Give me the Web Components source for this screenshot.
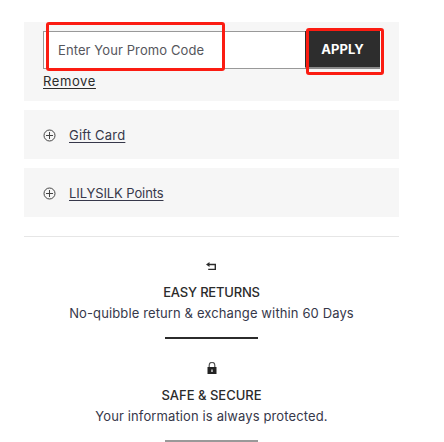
<!DOCTYPE html>
<html>
<head>
<meta charset="utf-8">
<style>
    html, body { margin: 0; padding: 0; background: #fff; }
    body { font-family: Inter, Roboto, sans-serif; color: #2b2b2b; overflow: hidden; height: 442px; }
    main { display: block; width: 375px; margin-left: 24px; padding-top: 22px; }
</style>
</head>
<body>
<main>
    <promo-box></promo-box>
    <toggle-row style="--track: .2px">Gift Card</toggle-row>
    <toggle-row style="--track: -.1px">LILYSILK Points</toggle-row>
    <hr-line></hr-line>
    <service-item heading="EASY RETURNS" icon="return" style="--track: -.2px">No-quibble return &amp; exchange within 60 Days</service-item>
    <service-item heading="SAFE &amp; SECURE" icon="lock" fade>Your information is always protected.</service-item>
</main>
<script>
class PromoBox extends HTMLElement {
    connectedCallback() {
        this.attachShadow({mode: 'open'});
        this.shadowRoot.innerHTML = `
            <style>
                :host { display: block; position: relative; height: 79px; background: #f6f6f6; padding: 9px 19px 0; box-sizing: border-box; }
                .row { display: flex; width: 337px; height: 38px; }
                .field { flex: 1; box-sizing: border-box; border: 1px solid #999; border-right: 0; background: #fff; padding-left: 14px; display: flex; align-items: center; font-size: 13px; letter-spacing: .1px; color: #55565c; }
                button { width: 75px; height: 38px; box-sizing: border-box; border: 0; border-bottom: 2px solid #8a8a8a; background: #2d2d2d; color: #fff; padding: 0; font: 700 13px Inter, sans-serif; }
                a { display: block; width: fit-content; margin-top: 4px; font-size: 13px; line-height: 16px; letter-spacing: .6px; color: #2b2b2b; text-decoration: underline; text-underline-offset: 2px; }
                .mark { position: absolute; box-sizing: border-box; border: 3px solid #fb1c12; border-radius: 3px; }
                .m1 { left: 22px; top: 0; width: 179px; height: 49px; }
                .m2 { left: 282px; top: 6px; width: 78px; height: 47px; }
            </style>
            <div class="row">
                <div class="field">Enter Your Promo Code</div>
                <button>APPLY</button>
            </div>
            <a>Remove</a>
            <div class="mark m1"></div>
            <div class="mark m2"></div>
        `;
    }
}

class ToggleRow extends HTMLElement {
    connectedCallback() {
        this.attachShadow({mode: 'open'});
        this.shadowRoot.innerHTML = `
            <style>
                :host { display: flex; align-items: center; gap: 13px; height: 49px; margin-top: 9px; padding-left: 19px; background: #f6f6f6; font-size: 13px; letter-spacing: var(--track, 0); }
                svg { width: 13px; height: 13px; margin-top: 2px; flex: none; }
                span { text-decoration: underline; text-underline-offset: 2px; color: #36384a; }
            </style>
            <svg viewBox="0 0 13 13" fill="none" stroke="#444" stroke-width="1"><circle cx="6.5" cy="6.5" r="5.5"/><path d="M3 6.5h7M6.5 3v7"/></svg>
            <span><slot></slot></span>
        `;
    }
}

class HrLine extends HTMLElement {
    connectedCallback() {
        this.attachShadow({mode: 'open'});
        this.shadowRoot.innerHTML = `
            <style>
                :host { display: block; height: 1px; margin-top: 19px; background: #e6e6e6; }
            </style>
        `;
    }
}

const ICONS = {
    return: '<svg width="11" height="9" viewBox="0 0 11 9"><path d="M0 2.5 3.5 0v1.8H10V8H2.2V6.7h6.4V3.2H3.5V5z" fill="#2b2b2b"/></svg>',
    lock: '<svg width="10" height="12" viewBox="0 0 10 12"><path d="M2.2 5V3.2a2.8 2.8 0 0 1 5.6 0V5" fill="none" stroke="#555" stroke-width="1.2"/><path d="M.5 5h9v7h-9z" fill="#222"/><path d="M4.4 7.5h1.2v2.5H4.4z" fill="#fff"/></svg>'
};

class ServiceItem extends HTMLElement {
    connectedCallback() {
        this.attachShadow({mode: 'open'});
        const heading = this.getAttribute('heading');
        const icon = ICONS[this.getAttribute('icon')];
        this.shadowRoot.innerHTML = `
            <style>
                :host { display: flex; flex-direction: column; align-items: center; padding-top: 22px; font-size: 13px; text-align: center; }
                .icon { height: 14px; display: flex; align-items: center; justify-content: center; }
                h4 { margin: 11px 0 0; font-size: 13px; font-weight: 500; line-height: 16px; letter-spacing: var(--track, 0); color: #2b2b2b; }
                :host([fade]) h4 { margin-top: 12px; }
                p { margin: 5px 0 0; line-height: 16px; letter-spacing: .12px; color: #36384a; }
                .bar { width: 93px; height: 2px; margin-top: 16px; background: #2b2b2b; }
                :host([fade]) .bar { background: #999; }
            </style>
            <div class="icon">${icon}</div>
            <h4>${heading}</h4>
            <p><slot></slot></p>
            <div class="bar"></div>
        `;
    }
}

customElements.define('promo-box', PromoBox);
customElements.define('toggle-row', ToggleRow);
customElements.define('hr-line', HrLine);
customElements.define('service-item', ServiceItem);
</script>
</body>
</html>
